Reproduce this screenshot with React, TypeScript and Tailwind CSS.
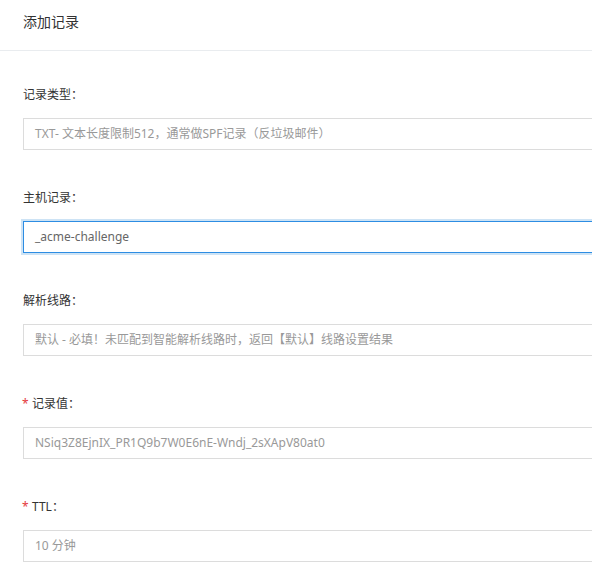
const fields = [
    { label: '记录类型', value: 'TXT- 文本长度限制512，通常做SPF记录（反垃圾邮件）', required: false, focused: false },
    { label: '主机记录', value: '_acme-challenge', required: false, focused: true },
    { label: '解析线路', value: '默认 - 必填！未匹配到智能解析线路时，返回【默认】线路设置结果', required: false, focused: false },
    { label: '记录值', value: 'NSiq3Z8EjnIX_PR1Q9b7W0E6nE-Wndj_2sXApV80at0', required: true, focused: false },
    { label: 'TTL', value: '10 分钟', required: true, focused: false },
]

export default function App() {
    return (
        <div className="w-[592px] h-[575px] overflow-hidden bg-white font-['Noto_Sans','Noto_Sans_CJK_SC',sans-serif]">
            {/* Header */}
            <div className="h-[51px] pt-[12px] pl-[23px] border-b border-[#e9ecef]">
                <h2 className="text-[14px] leading-[20px] text-[#333]">添加记录</h2>
            </div>

            {/* Form */}
            <div className="pt-[34px] pl-[23px] w-[640px]">
                {fields.map((f) => (
                    <div key={f.label} className="mb-[38px]">
                        <label className="flex items-center h-[20px] text-[12px] text-[#333] mb-[13px]">
                            {f.required && <span className="text-[#e4393c] w-[10px] -ml-[1px] text-[12px]">*</span>}
                            {f.label}：
                        </label>
                        <div
                            className={
                                f.focused
                                    ? 'h-[32px] flex items-center pl-[11px] text-[12px] text-[#666] border border-[#2d8de3] shadow-[0_0_0_2px_#cde3f5]'
                                    : 'h-[32px] flex items-center pl-[11px] text-[12px] text-[#999] border border-[#dcdcdc]'
                            }
                        >
                            {f.value}
                        </div>
                    </div>
                ))}
            </div>
        </div>
    )
}
